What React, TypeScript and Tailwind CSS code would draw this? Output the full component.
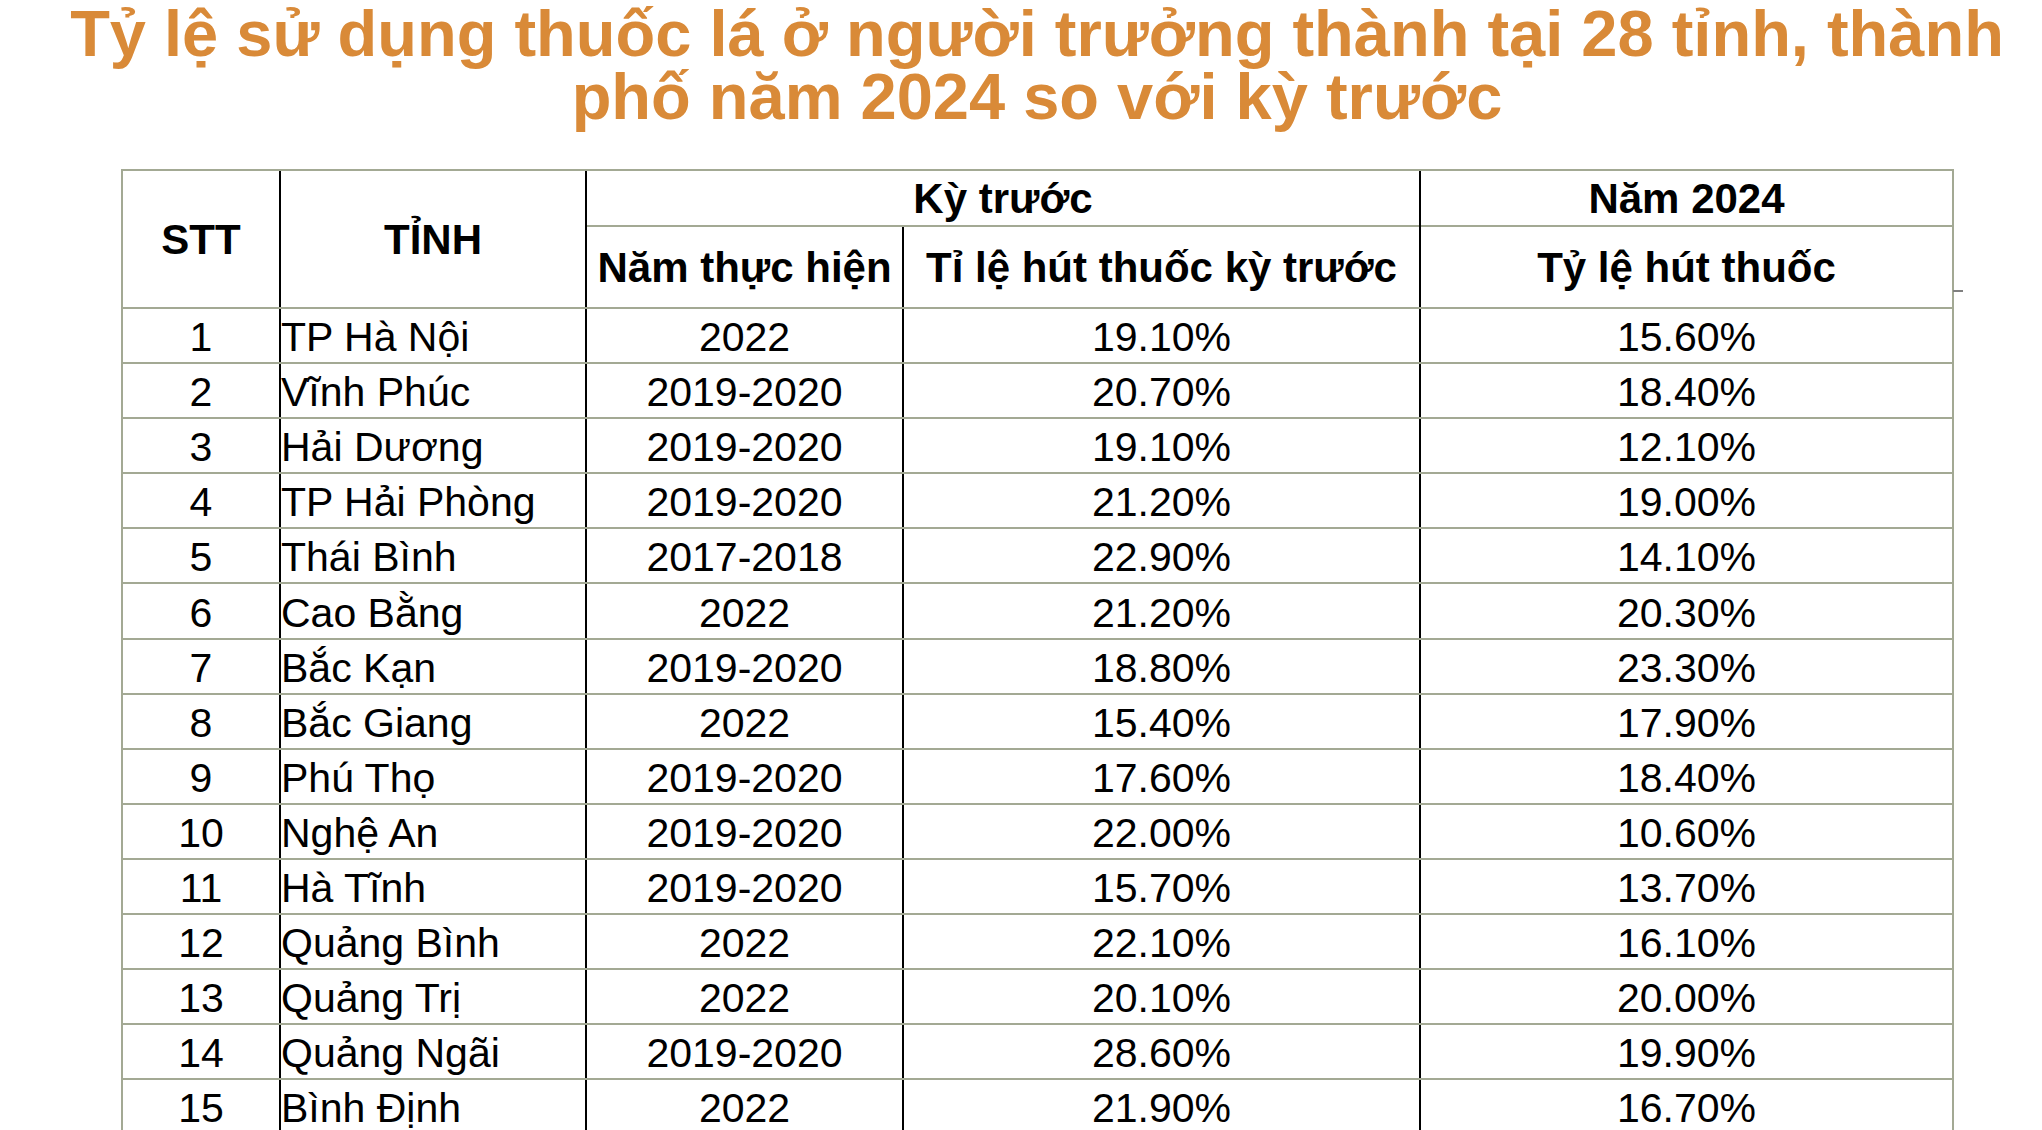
const rows: [string, string, string, string, string][] = [
  ["1", "TP Hà Nội", "2022", "19.10%", "15.60%"],
  ["2", "Vĩnh Phúc", "2019-2020", "20.70%", "18.40%"],
  ["3", "Hải Dương", "2019-2020", "19.10%", "12.10%"],
  ["4", "TP Hải Phòng", "2019-2020", "21.20%", "19.00%"],
  ["5", "Thái Bình", "2017-2018", "22.90%", "14.10%"],
  ["6", "Cao Bằng", "2022", "21.20%", "20.30%"],
  ["7", "Bắc Kạn", "2019-2020", "18.80%", "23.30%"],
  ["8", "Bắc Giang", "2022", "15.40%", "17.90%"],
  ["9", "Phú Thọ", "2019-2020", "17.60%", "18.40%"],
  ["10", "Nghệ An", "2019-2020", "22.00%", "10.60%"],
  ["11", "Hà Tĩnh", "2019-2020", "15.70%", "13.70%"],
  ["12", "Quảng Bình", "2022", "22.10%", "16.10%"],
  ["13", "Quảng Trị", "2022", "20.10%", "20.00%"],
  ["14", "Quảng Ngãi", "2019-2020", "28.60%", "19.90%"],
  ["15", "Bình Định", "2022", "21.90%", "16.70%"],
];

export default function App() {
  return (
    <div className="h-[1130px] overflow-hidden bg-white font-['Liberation_Sans',Arial,sans-serif] text-black">
      <h1 className="whitespace-nowrap pl-[32px] pt-[2px] text-center text-[65px] font-bold leading-[63px] text-[#d98a38]">
        Tỷ lệ sử dụng thuốc lá ở người trưởng thành tại 28 tỉnh, thành
        <br />
        phố năm 2024 so với kỳ trước
      </h1>

      <div className="relative ml-[121px] mt-[41px] w-[1833px] border-x-2 border-t-2 border-[#a3a994]">
        {/* stray tick outside the right edge */}
        <div className="absolute left-[1830px] top-[119px] h-[2px] w-[10px] bg-[#808080]" />

        {/* header */}
        <div className="flex h-[138px] border-b-2 border-[#a3a994] text-[42px] font-bold">
          <div className="flex w-[158px] items-center justify-center border-r-2 border-black">
            STT
          </div>
          <div className="flex w-[306px] items-center justify-center border-r-2 border-black">
            TỈNH
          </div>
          <div className="flex w-[834px] flex-col border-r-2 border-black">
            <div className="flex h-[56px] items-center justify-center border-b-2 border-[#a3a994]">
              Kỳ trước
            </div>
            <div className="flex flex-1">
              <div className="flex w-[317px] items-center justify-center border-r-2 border-black">
                Năm thực hiện
              </div>
              <div className="flex flex-1 items-center justify-center">
                Tỉ lệ hút thuốc kỳ trước
              </div>
            </div>
          </div>
          <div className="flex flex-1 flex-col">
            <div className="flex h-[56px] items-center justify-center border-b-2 border-[#a3a994]">
              Năm 2024
            </div>
            <div className="flex flex-1 items-center justify-center">
              Tỷ lệ hút thuốc
            </div>
          </div>
        </div>

        {/* body */}
        {rows.map(([stt, tinh, nam, truoc, nay]) => (
          <div
            key={stt}
            className="flex h-[55.1px] border-b-2 border-[#a3a994] text-[41px] leading-none"
          >
            <div className="flex w-[158px] items-center justify-center border-r-2 border-black pt-[4px]">
              {stt}
            </div>
            <div className="flex w-[306px] items-center whitespace-nowrap border-r-2 border-black pt-[4px]">
              {tinh}
            </div>
            <div className="flex w-[317px] items-center justify-center border-r-2 border-black pt-[4px]">
              {nam}
            </div>
            <div className="flex w-[517px] items-center justify-center border-r-2 border-black pt-[4px]">
              {truoc}
            </div>
            <div className="flex flex-1 items-center justify-center pt-[4px]">{nay}</div>
          </div>
        ))}
      </div>
    </div>
  );
}
